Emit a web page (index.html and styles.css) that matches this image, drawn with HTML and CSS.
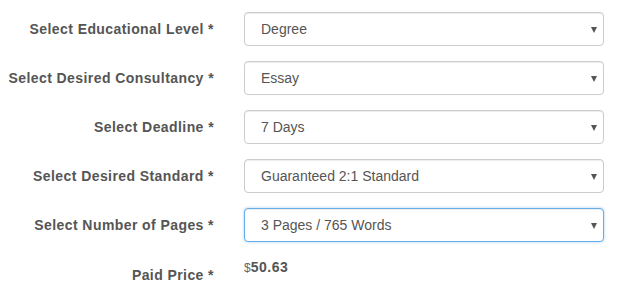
FILE: index.html
```html
<!DOCTYPE html>
<html lang="en">
<head>
  <meta charset="UTF-8" />
  <title>Order Form</title>
  <link rel="stylesheet" href="styles.css">
</head>
<body>

  <form class="order-form">
    <div class="form-row">
      <label class="control-label">Select Educational Level *</label>
      <div class="select-wrap">
        <select class="form-control">
          <option>Degree</option>
        </select>
      </div>
    </div>
    <div class="form-row">
      <label class="control-label">Select Desired Consultancy *</label>
      <div class="select-wrap">
        <select class="form-control">
          <option>Essay</option>
        </select>
      </div>
    </div>
    <div class="form-row">
      <label class="control-label">Select Deadline *</label>
      <div class="select-wrap">
        <select class="form-control">
          <option>7 Days</option>
        </select>
      </div>
    </div>
    <div class="form-row">
      <label class="control-label">Select Desired Standard *</label>
      <div class="select-wrap">
        <select class="form-control">
          <option>Guaranteed 2:1 Standard</option>
        </select>
      </div>
    </div>
    <div class="form-row">
      <label class="control-label">Select Number of Pages *</label>
      <div class="select-wrap">
        <select class="form-control focused">
          <option>3 Pages / 765 Words</option>
        </select>
      </div>
    </div>
    <div class="form-row price-row">
      <label class="control-label">Paid Price *</label>
      <div class="price"><span class="currency">$</span><b>50.63</b></div>
    </div>
  </form>

</body>
</html>
```

FILE: styles.css
```css
* {
  margin: 0;
  padding: 0;
  box-sizing: border-box;
}

body {
  background-color: #ffffff;
  color: #555555;
  font-family: 'Liberation Sans', Arial, sans-serif;
  font-size: 14px;
}

.order-form {
  padding-top: 12px;
}

.form-row {
  display: flex;
  align-items: center;
  margin-bottom: 15px;
}

.control-label {
  width: 229px;
  padding-right: 15px;
  text-align: right;
  font-weight: bold;
  letter-spacing: 0.42px;
  color: #555555;
}

.select-wrap {
  position: relative;
  width: 360px;
  margin-left: 15px;
}
.select-wrap::after {
  content: "";
  position: absolute;
  right: 7px;
  top: 15px;
  border-left: 3.5px solid transparent;
  border-right: 3.5px solid transparent;
  border-top: 6px solid #555555;
}

.form-control {
  display: block;
  width: 100%;
  height: 34px;
  padding: 0 24px 0 16px;
  font-family: inherit;
  font-size: 14px;
  color: #555555;
  background-color: #ffffff;
  border: 1px solid #cccccc;
  border-radius: 4px;
  box-shadow: inset 0 1px 1px rgba(0, 0, 0, 0.075);
  appearance: none;
  -webkit-appearance: none;
  outline: none;
}
.form-control.focused {
  border-color: #66afe9;
  box-shadow: inset 0 1px 1px rgba(0, 0, 0, 0.075), 0 0 3px rgba(102, 175, 233, 0.6);
}

.price-row {
  align-items: flex-start;
}
.price-row .control-label {
  padding-top: 10px;
}
.price {
  margin-left: 15px;
  padding-top: 2px;
  font-size: 14px;
}
.price .currency {
  font-size: 12px;
  color: #666666;
}
.price b {
  font-weight: bold;
  letter-spacing: 0.5px;
  color: #555555;
}
```
